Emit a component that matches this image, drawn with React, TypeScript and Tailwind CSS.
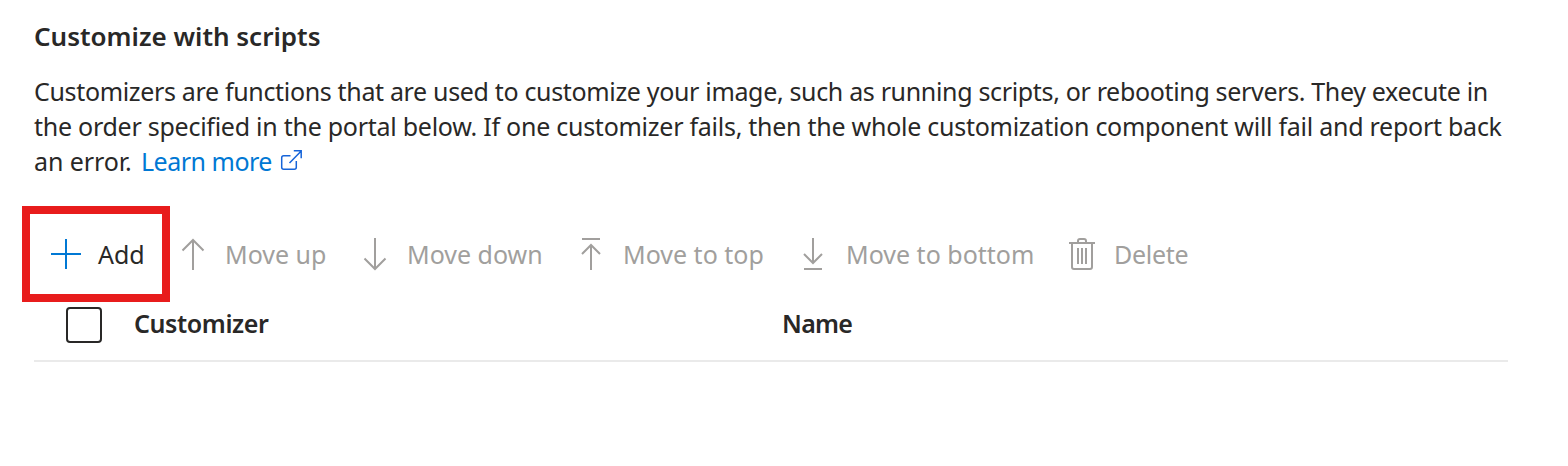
import type { ReactNode } from "react";

function Icon({ children }: { children: ReactNode }) {
  return (
    <svg width="32" height="36" viewBox="0 0 32 36" fill="none" stroke="currentColor" strokeWidth="2" className="shrink-0">
      {children}
    </svg>
  );
}

type CommandProps = {
  icon: ReactNode;
  label: string;
  className: string;
  labelClass: string;
};

function Command({ icon, label, className, labelClass }: CommandProps) {
  return (
    <button type="button" className={`flex h-9 shrink-0 items-center text-left ${className}`}>
      <Icon>{icon}</Icon>
      <span className={`whitespace-nowrap leading-9 ${labelClass}`}>{label}</span>
    </button>
  );
}

export default function App() {
  return (
    <main className="relative h-[466px] w-[1568px] overflow-hidden bg-white pl-[34px] pt-[18px] font-['Noto_Sans',sans-serif] text-[25px] text-[#292827]">
      <h2 className="h-9 whitespace-nowrap text-[26px] font-[560] leading-9">
        <span>Customize with scripts</span>
      </h2>

      <p className="mt-5 whitespace-nowrap leading-[35px]">
        <span className="block h-[35px] tracking-[-0.336px]">
          Customizers are functions that are used to customize your image, such as running scripts, or rebooting servers. They execute in
        </span>
        <span className="block h-[35px] tracking-[-0.26px]">
          the order specified in the portal below. If one customizer fails, then the whole customization component will fail and report back
        </span>
        <span className="flex h-[35px] items-center">
          <span className="w-[107px] tracking-[-0.1px]">an error.</span>
          <a href="#" className="flex items-center text-[#0078d4]">
            <span className="w-[138px] tracking-[-0.5px]">Learn more</span>
            <svg width="24" height="24" viewBox="0 0 24 24" fill="none" stroke="#1664d9" strokeWidth="1.5" className="mb-0.5">
              <path d="M11.5 6.7H4.7Q2.7 6.7 2.7 8.7V18.3Q2.7 20.3 4.7 20.3H15.3Q17.3 20.3 17.3 18.3V12M10.5 14L22 2.2M14.8 1.8H22.2V9.2" />
            </svg>
          </a>
        </span>
      </p>

      <div className="mt-[57px] flex pl-4 text-[#a19f9d]">
        <Command
          className="w-[127px]"
          labelClass="ml-4 text-[#292827]"
          label="Add"
          icon={<path stroke="#0078d4" d="M1 18H31M16 3V33" />}
        />
        <Command className="w-[182px]" labelClass="ml-4" label="Move up" icon={<path d="M16 34V4M5.5 14.5L16 4L26.5 14.5" />} />
        <Command className="w-[216px]" labelClass="ml-4" label="Move down" icon={<path d="M16 2V33M5.5 22.5L16 33L26.5 22.5" />} />
        <Command className="w-[222px]" labelClass="ml-4" label="Move to top" icon={<path d="M7 3H25M16 34V9M7 18L16 9L25 18" />} />
        <Command className="w-[269px]" labelClass="ml-[17px]" label="Move to bottom" icon={<path d="M16 2V27M7 18L16 27L25 18M7 33H25" />} />
        <Command
          className="w-[140px]"
          labelClass="ml-4 tracking-[-0.3px]"
          label="Delete"
          icon={<path d="M3 7H29M6 7V31Q6 33 8 33H24Q26 33 26 31V7M12 7V5Q12 3 14 3H18Q20 3 20 5V7M12 12V28M16 12V28M20 12V28" />}
        />
      </div>

      <div className="mt-[35px] flex h-[55px] w-[1474px] border-b-2 border-[#eaeaea] pl-8 font-[560]">
        <span role="checkbox" aria-checked="false" className="h-9 w-9 shrink-0 rounded-[4px] border-2 border-[#292827]" />
        <span className="ml-8 w-[648px] leading-[32px] tracking-[-0.4px]">Customizer</span>
        <span className="leading-[32px] tracking-[-0.7px]">Name</span>
      </div>

      <div className="pointer-events-none absolute left-[22px] top-[206px] h-24 w-[148px] border-8 border-[#e81c1c]" />
    </main>
  );
}
